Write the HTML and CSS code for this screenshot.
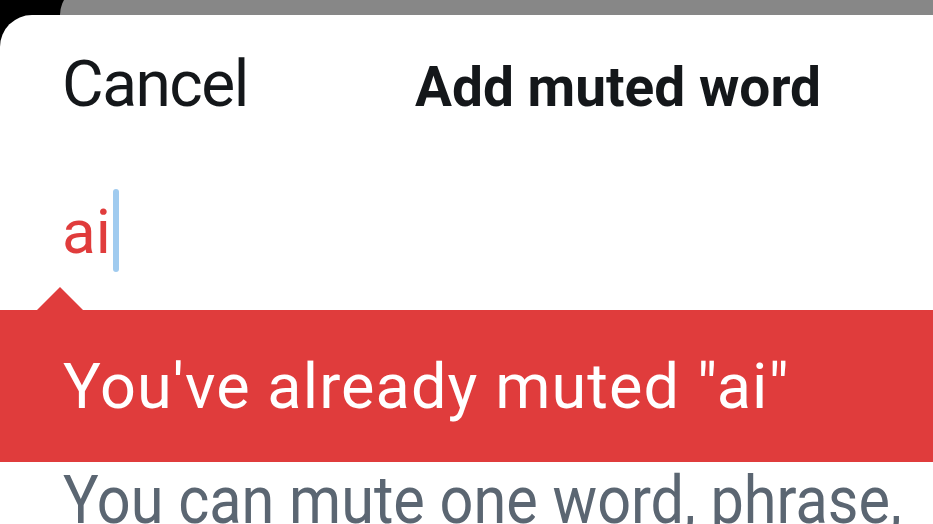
FILE: index.html
```html
<!DOCTYPE html>
<html>
<head>
<meta charset="utf-8">
<link rel="stylesheet" href="styles.css">
</head>
<body>
<div class="screen">
  <div class="back-sheet"></div>
  <div class="sheet">
    <div class="header">
      <span class="cancel">Cancel</span>
      <span class="title">Add muted word</span>
    </div>
    <div class="input-row">
      <span class="input-text">ai</span>
      <span class="caret"></span>
    </div>
    <div class="pointer"></div>
    <div class="banner">You've already muted "ai"</div>
    <div class="hint">You can mute one word, phrase,</div>
  </div>
</div>
</body>
</html>
```

FILE: styles.css
```css
html, body {
  margin: 0;
  padding: 0;
  background: #000;
  overflow: hidden;
}

.screen {
  width: 933px;
  height: 524px;
  overflow: hidden;
  display: flow-root;
  background: #000;
  font-family: "Roboto", "Liberation Sans", sans-serif;
}

.back-sheet {
  height: 30px;
  margin-top: -15px;
  margin-left: 60px;
  background: #878787;
  border-top-left-radius: 60px;
}

.sheet {
  height: 600px;
  background: #fff;
  border-top-left-radius: 32px;
}

.header {
  display: flex;
  align-items: baseline;
  padding: 38px 0 0 62px;
  height: 64px;
  white-space: nowrap;
}

.cancel {
  width: 353px;
  flex: none;
  font-size: 64px;
  line-height: 64px;
  letter-spacing: -1.5px;
  color: #14171a;
}

.title {
  font-size: 55px;
  line-height: 64px;
  font-weight: 700;
  color: #14171a;
}

.input-row {
  display: flex;
  align-items: flex-start;
  box-sizing: border-box;
  height: 170px;
  padding: 83.8px 0 0 62px;
}

.input-text {
  font-size: 62px;
  line-height: 62px;
  color: #e03c3c;
}

.caret {
  width: 6px;
  height: 83px;
  margin-top: -11.8px;
  margin-left: 2px;
  border-radius: 3px;
  background: #a0cbef;
}

.pointer {
  width: 0;
  height: 0;
  margin-left: 37px;
  border-left: 23px solid transparent;
  border-right: 23px solid transparent;
  border-bottom: 23px solid #e03c3c;
}

.banner {
  box-sizing: border-box;
  height: 152px;
  padding: 45px 0 0 63px;
  background: #e03c3c;
  color: #fff;
  font-size: 63px;
  line-height: 63px;
  letter-spacing: 1.1px;
  white-space: nowrap;
}

.hint {
  padding: 6px 0 0 63px;
  font-size: 66px;
  line-height: 66px;
  color: #5b6672;
  white-space: nowrap;
  transform: scaleX(0.9);
  transform-origin: 63px 0;
}
```
